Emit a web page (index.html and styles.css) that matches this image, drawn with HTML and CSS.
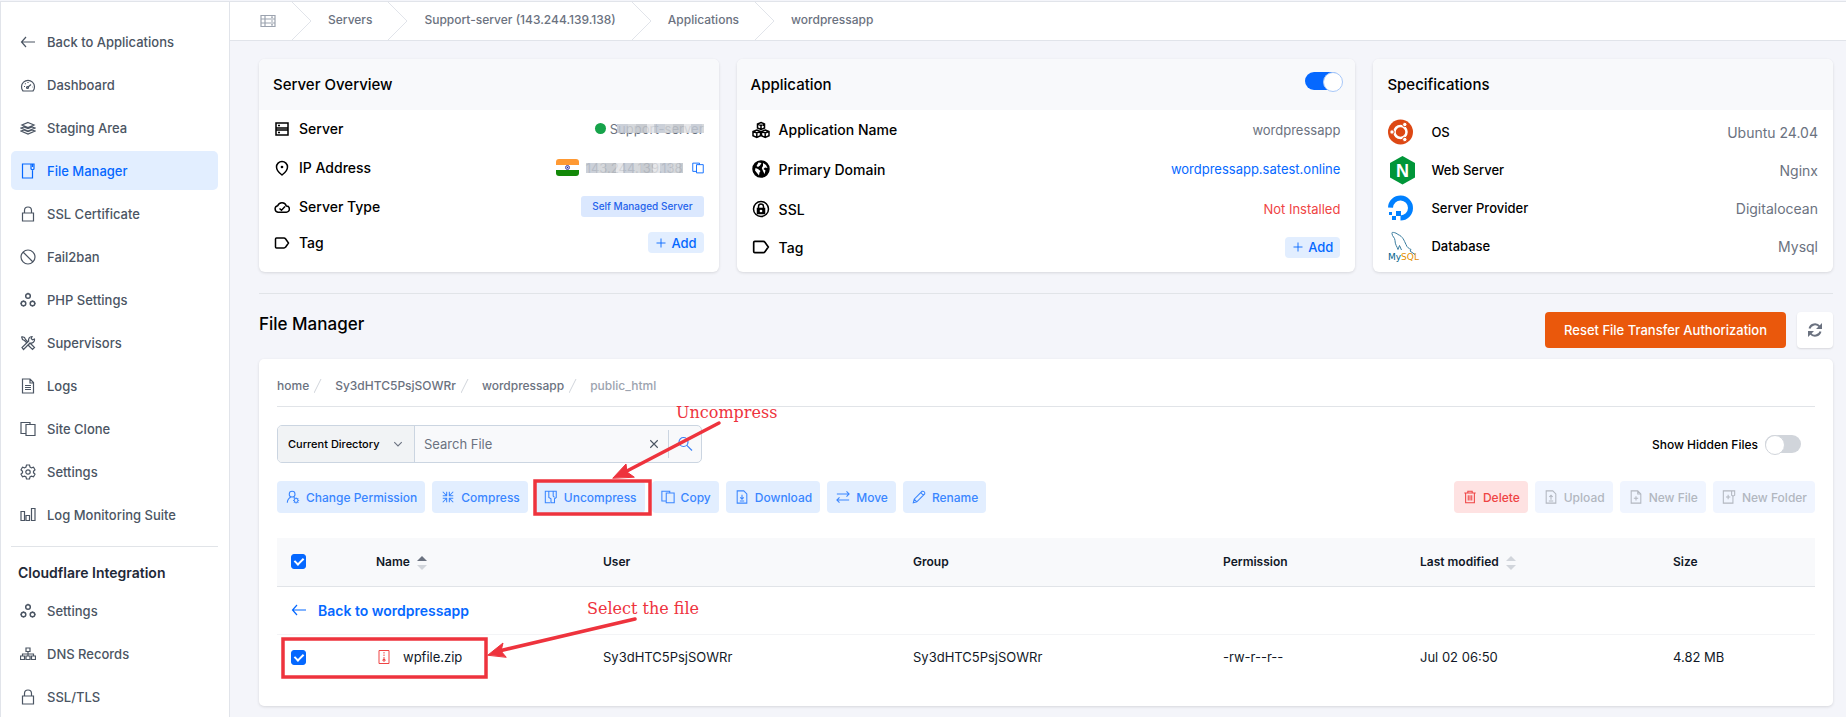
FILE: index.html
```html
<!DOCTYPE html>
<html lang="en">
<head>
    <meta charset="UTF-8">
    <meta name="viewport" content="width=device-width, initial-scale=1.0">
    <title>File Manager - wordpressapp</title>
    <link rel="stylesheet" href="styles.css">
</head>
<body>
    <svg class="sprite" aria-hidden="true">
        <symbol id="i-back" viewBox="0 0 16 16"><path d="M6 3 1.500 8 6 13M2 8h13"/></symbol>
        <symbol id="i-dash" viewBox="0 0 16 16"><path d="M3 14a6.500 6.500 0 1 1 10 0zM7.500 10.500 11 7.500M4 9.500h1M8 5v1M5 6.500l.7.7M12 10h.5"/><circle cx="7.500" cy="10.500" r="1"/></symbol>
        <symbol id="i-layers" viewBox="0 0 16 16"><path d="M8 2.500 14 5 8 7.500 2 5zM1 8l3-1 4 1.500L12 7l3 1-7 3zM1 11l3-1 4 1.500 4-1.500 3 1-7 3z"/></symbol>
        <symbol id="i-folder" viewBox="0 0 16 16"><path d="M11 1H2.500v14h10V7M11 1h3v5l-1.500 1L11 6zM12.500 1v3"/></symbol>
        <symbol id="i-lock" viewBox="0 0 16 16"><path d="M2.500 7h11v8h-11zM4.500 7V4.500a3.500 3.500 0 0 1 7 0V7"/></symbol>
        <symbol id="i-ban" viewBox="0 0 16 16"><circle cx="8" cy="8" r="7"/><path d="m3 3 10 10"/></symbol>
        <symbol id="i-nodes" viewBox="0 0 16 16"><g stroke-width="1.500"><circle cx="8" cy="4" r="2.300"/><circle cx="3.500" cy="11.500" r="2.300"/><circle cx="12.500" cy="11.500" r="2.300"/></g><path d="M8 .8v1M5 4h1M10 4h1M3.500 8.500v1M12.500 8.500v1M.5 11.500h1M14.500 11.500h1M3.500 13.500v1M12.500 13.500v1"/></symbol>
        <symbol id="i-tools" viewBox="0 0 16 16"><path d="m1.500 1.500 3 1 1 2L8 7M1.500 1.500l1 3 2 1L7 8M9 9l1.500-.5 4 4-2 2-4-4zM14.500 4l-2 .8-1.300-1.300L12 1.500A3.500 3.500 0 0 0 8.700 6L2 12.500 3.500 14.500 10 8a3.500 3.500 0 0 0 4.500-4z"/></symbol>
        <symbol id="i-doc" viewBox="0 0 16 16"><path d="M2.500 1H10l3.500 3.500V15h-11zM10 1v4h3.500M5 7.500h6M5 9.500h6M5 11.500h6"/></symbol>
        <symbol id="i-copy" viewBox="0 0 16 16"><path d="M6 3.500h9v11H6zM6 12.500H1v-11h9v2"/></symbol>
        <symbol id="i-gear" viewBox="0 0 16 16"><circle cx="8" cy="8" r="2.200"/><path d="M6.500 1h3l.5 2 1.500.9 2-.6 1.500 2.500L13.500 7.200v1.600l1.500 1.400-1.500 2.500-2-.6L10 13l-.5 2h-3L6 13l-1.500-.9-2 .6L1 10.200l1.500-1.400V7.200L1 5.800l1.500-2.500 2 .6L6 3z"/></symbol>
        <symbol id="i-bars" viewBox="0 0 16 16"><path d="M1 4.500h3.500v9H1zM6 8.500h3.500v5H6zM11.500 1.500H15v12h-3.500z"/></symbol>
        <symbol id="i-tree" viewBox="0 0 16 16"><path d="M6 2h4v3.500H6zM8 5.500V10M2.500 10V8h11v2M.5 10h4v3.500h-4zM6 10h4v3.500H6zM11.500 10h4v3.500h-4z"/></symbol>
        <symbol id="i-table" viewBox="0 0 16 16"><path d="M1 2.500h14v11H1zM1 6h14M1 10h14M5 2.500v11M11 4.200h2M11 8h2M11 11.800h2"/></symbol>
        <symbol id="i-server" viewBox="0 0 16 16"><path d="M2 2h12v5H2zM2 9h12v5H2zM4 4.500h2M4 11.500h2M2 7v2M14 7v2"/></symbol>
        <symbol id="i-pin" viewBox="0 0 16 16"><path d="M8 15S2.500 11 2.500 7a5.500 5.500 0 0 1 11 0c0 4-5.500 8-5.500 8z"/><circle cx="8" cy="7" r=".6"/></symbol>
        <symbol id="i-cloud" viewBox="0 0 16 16"><path d="M4 13.200a3.300 3.300 0 0 1-.3-6.500A4.500 4.500 0 0 1 12.300 7a3.100 3.100 0 0 1 0 6.200zM5.500 9.500l2 1.700L11 7.500"/></symbol>
        <symbol id="i-tag" viewBox="0 0 16 16"><path d="M2.500 3H10q1 0 1.500.8L14.500 8l-3 4.200Q11 13 10 13H2.500Q1.500 13 1.500 12V4q0-1 1-1z"/></symbol>
        <symbol id="i-cubes" viewBox="0 0 18 18"><path d="m9 1.500 3.500 1.500v4L9 8.500 5.500 7V3zM5.500 3 9 4.500 12.500 3M9 4.500v4M4.800 9l3.700 1.500v4.300L4.800 16.500 1 14.800v-4.300zM1 10.500 4.800 12l3.700-1.500M4.800 12v4.500M13.200 9l3.800 1.500v4.300l-3.800 1.700-3.700-1.700v-4.300zM9.500 10.500l3.700 1.500 3.800-1.500M13.200 12v4.500"/></symbol>
        <symbol id="i-globe" viewBox="0 0 18 18"><circle cx="9" cy="9" r="8" fill="currentColor"/><path d="M3.500 8 6 9l2.500 2-1 1.500-.5 3-2-2.500-2-2.500zM6.500 2.500 9.500 3 8 5.500 6 7 4.500 6zM11 3l3 2 1.500 3-2.500-.5L11.500 9l2 1.500L12.500 14 11 11 9.800 8 11 6z" fill="#fff" stroke="none"/></symbol>
        <symbol id="i-ssl" viewBox="0 0 18 18"><circle cx="9" cy="9" r="7.500"/><path d="M5.500 8.500h7v5h-7z" fill="currentColor"/><path d="M6.500 8V6.500a2.500 2.500 0 0 1 5 0V8"/><circle cx="9" cy="11" r=".6" stroke="#fff"/></symbol>
        <symbol id="i-plus" viewBox="0 0 16 16"><path d="M8 2v12M2 8h12"/></symbol>
        <symbol id="i-refresh" viewBox="0 0 16 16"><path d="M2.500 6.500a5.700 5.700 0 0 1 10-2M13.500 9.500a5.700 5.700 0 0 1-10 2" stroke-width="2"/><path d="M15 1v6H9zM1 15V9h6z" fill="currentColor" stroke="none"/></symbol>
        <symbol id="i-down" viewBox="0 0 16 16"><path d="m3 5.500 5 5 5-5"/></symbol>
        <symbol id="i-close" viewBox="0 0 16 16"><path d="m3 3 10 10M13 3 3 13"/></symbol>
        <symbol id="i-search" viewBox="0 0 16 16"><circle cx="6.500" cy="6" r="4.500"/><path d="m9.800 9.300 5.200 5.200"/></symbol>
        <symbol id="i-user" viewBox="0 0 16 16"><circle cx="7" cy="4.800" r="3.300"/><path d="M1.500 14.500C1.500 11 3 9.500 5.500 8M9 8l1 1"/><circle cx="11.500" cy="12" r="2.200"/><path d="M11.500 8.500v1M11.500 14.500v1M8 12h1M14 12h1M9 9.500l.8.800M13.300 13.800l.8.800M14 9.500l-.8.800M9.700 13.800l-.7.700"/></symbol>
        <symbol id="i-compress" viewBox="0 0 16 16"><path d="M6.500 2v4.500H2M9.500 2v4.500H14M6.500 14V9.500H2M9.500 14V9.500H14M6 6 2 2M10 6l4-4M6 10l-4 4M10 10l4 4"/></symbol>
        <symbol id="i-unzip" viewBox="0 0 16 16"><path d="M7 14.500H1.500v-13H14v7l-2 1.500v4.500H8V10L5.500 8.500v-7M10.500 2v5l1.500 1.500"/></symbol>
        <symbol id="i-download" viewBox="0 0 16 16"><path d="M2.500 1H10l3.500 3.500V15h-11zM8 5.500v5M6 8.500l2 2 2-2M5.500 12.500h5"/></symbol>
        <symbol id="i-move" viewBox="0 0 16 16"><path d="M1 4.500h14M12 1.500l3 3-3 3M15 11.500H1M4 8.500l-3 3 3 3"/></symbol>
        <symbol id="i-pencil" viewBox="0 0 16 16"><path d="m1.500 14.500 1-4 9-9q1.500-.5 2.500.5t.5 2.500l-9 9zM10 3l3 3M2.500 10.500l3 3"/></symbol>
        <symbol id="i-trash" viewBox="0 0 16 16"><path d="M1.500 3.500h13M5.500 3.500v-2h5v2M3 3.500v11h10v-11M6 6v6M8 6v6M10 6v6"/></symbol>
        <symbol id="i-upload" viewBox="0 0 16 16"><path d="M2.500 1H10l3.500 3.500V15h-11zM8 11V6M6 8l2-2 2 2M5.500 12.500h5"/></symbol>
        <symbol id="i-newfile" viewBox="0 0 16 16"><path d="M2.500 1H10l3.500 3.500V15h-11zM10 1v3.500h3.500M8 7v5M5.500 9.500h5"/></symbol>
        <symbol id="i-newfolder" viewBox="0 0 16 16"><path d="M11 1H1.500v14h11V7M11 1h3.500v5l-2 1L11 6zM7 5.500v5M4.500 8h5"/></symbol>
        <symbol id="i-zip" viewBox="0 0 12 14"><path d="M1 .5h10v13H1zM6 2v1.500M6 4.500V6M6 7v2M5 9.500h2v1.500H5z"/></symbol>
    </svg>

    <aside class="sidebar">
        <nav>
            <a class="nav-item" href="#"><svg class="icon"><use href="#i-back"/></svg>Back to Applications</a>
            <a class="nav-item" href="#"><svg class="icon"><use href="#i-dash"/></svg>Dashboard</a>
            <a class="nav-item" href="#"><svg class="icon"><use href="#i-layers"/></svg>Staging Area</a>
            <a class="nav-item active" href="#"><svg class="icon"><use href="#i-folder"/></svg>File Manager</a>
            <a class="nav-item" href="#"><svg class="icon"><use href="#i-lock"/></svg>SSL Certificate</a>
            <a class="nav-item" href="#"><svg class="icon"><use href="#i-ban"/></svg>Fail2ban</a>
            <a class="nav-item" href="#"><svg class="icon"><use href="#i-nodes"/></svg>PHP Settings</a>
            <a class="nav-item" href="#"><svg class="icon"><use href="#i-tools"/></svg>Supervisors</a>
            <a class="nav-item" href="#"><svg class="icon"><use href="#i-doc"/></svg>Logs</a>
            <a class="nav-item" href="#"><svg class="icon"><use href="#i-copy"/></svg>Site Clone</a>
            <a class="nav-item" href="#"><svg class="icon"><use href="#i-gear"/></svg>Settings</a>
            <a class="nav-item" href="#"><svg class="icon"><use href="#i-bars"/></svg>Log Monitoring Suite</a>
        </nav>
        <h2 class="nav-title">Cloudflare Integration</h2>
        <nav>
            <a class="nav-item" href="#"><svg class="icon"><use href="#i-nodes"/></svg>Settings</a>
            <a class="nav-item" href="#"><svg class="icon"><use href="#i-tree"/></svg>DNS Records</a>
            <a class="nav-item" href="#"><svg class="icon"><use href="#i-lock"/></svg>SSL/TLS</a>
        </nav>
    </aside>

    <div class="page">
        <nav class="crumbs">
            <a href="#" aria-label="Home"><svg class="icon"><use href="#i-table"/></svg></a>
            <svg class="sep" viewBox="0 0 20 38"><path d="M0 0l19 19L0 38"/></svg>
            <a href="#">Servers</a>
            <svg class="sep" viewBox="0 0 20 38"><path d="M0 0l19 19L0 38"/></svg>
            <a href="#">Support-server (143.244.139.138)</a>
            <svg class="sep" viewBox="0 0 20 38"><path d="M0 0l19 19L0 38"/></svg>
            <a href="#">Applications</a>
            <svg class="sep" viewBox="0 0 20 38"><path d="M0 0l19 19L0 38"/></svg>
            <a href="#">wordpressapp</a>
        </nav>

        <main class="main">
            <div class="cards">
                <section class="card">
                    <header class="card-header"><h3>Server Overview</h3></header>
                    <div class="card-body server-rows">
                        <div class="row">
                            <svg class="icon"><use href="#i-server"/></svg><span class="label">Server</span>
                            <span class="dot"></span><span class="value masked">Support-server</span>
                        </div>
                        <div class="row">
                            <svg class="icon"><use href="#i-pin"/></svg><span class="label">IP Address</span>
                            <svg class="flag" viewBox="0 0 23 17"><path fill="#fff" d="M0 0h23v17H0z"/><path fill="#ff9933" d="M0 0h23v6H0z"/><path fill="#138808" d="M0 11h23v6H0z"/><circle cx="11.500" cy="8.500" r="2" fill="#cfd0f0" stroke="#4a4ab0"/><circle cx="11.500" cy="8.500" r=".7" fill="#22228a"/></svg>
                            <span class="value masked ip">143.244.139.138</span>
                            <button class="copy-btn" aria-label="Copy IP"><svg class="icon"><use href="#i-copy"/></svg></button>
                        </div>
                        <div class="row">
                            <svg class="icon"><use href="#i-cloud"/></svg><span class="label">Server Type</span>
                            <span class="badge">Self Managed Server</span>
                        </div>
                        <div class="row">
                            <svg class="icon"><use href="#i-tag"/></svg><span class="label">Tag</span>
                            <button class="add-btn"><svg class="icon"><use href="#i-plus"/></svg>Add</button>
                        </div>
                    </div>
                </section>

                <section class="card card-wide">
                    <header class="card-header"><h3>Application</h3><input class="switch" type="checkbox" aria-label="Application enabled" checked></header>
                    <div class="card-body app-rows">
                        <div class="row"><svg class="icon"><use href="#i-cubes"/></svg><span class="label">Application Name</span><span class="value">wordpressapp</span></div>
                        <div class="row"><svg class="icon"><use href="#i-globe"/></svg><span class="label">Primary Domain</span><a class="value link" href="#">wordpressapp.satest.online</a></div>
                        <div class="row"><svg class="icon"><use href="#i-ssl"/></svg><span class="label">SSL</span><span class="value danger">Not Installed</span></div>
                        <div class="row"><svg class="icon"><use href="#i-tag"/></svg><span class="label">Tag</span><button class="add-btn"><svg class="icon"><use href="#i-plus"/></svg>Add</button></div>
                    </div>
                </section>

                <section class="card">
                    <header class="card-header"><h3>Specifications</h3></header>
                    <div class="card-body spec-rows">
                        <div class="row">
                            <svg class="logo" viewBox="0 0 28 28"><circle cx="12.500" cy="14" r="12.500" fill="#dd4814"/><circle cx="12.500" cy="14" r="6" fill="none" stroke="#fff" stroke-width="2.500"/><g fill="#fff" stroke="#dd4814"><circle cx="4" cy="14" r="2.200"/><circle cx="16.800" cy="6.500" r="2.200"/><circle cx="16.800" cy="21.500" r="2.200"/></g></svg>
                            <span class="label">OS</span><span class="value">Ubuntu 24.04</span>
                        </div>
                        <div class="row">
                            <svg class="logo" viewBox="0 0 28 28"><path fill="#009639" d="M14.500 0 27 7v14.500L14.500 28.500 2 21.500V7z"/><text class="nginx-n" x="14.500" y="21" text-anchor="middle">N</text></svg>
                            <span class="label">Web Server</span><span class="value">Nginx</span>
                        </div>
                        <div class="row">
                            <svg class="logo" viewBox="0 0 28 28"><path d="M2.500 13.500a10 10 0 1 1 10 10.500" fill="none" stroke="#0080ff" stroke-width="5"/><path fill="#0080ff" d="M8 17h5v5H8zM4 22h4v4H4zM1 18h3v3H1z"/></svg>
                            <span class="label">Server Provider</span><span class="value">Digitalocean</span>
                        </div>
                        <div class="row">
                            <svg class="logo" viewBox="0 0 28 28"><path d="M4 1.500c-1-2 4-1 6 1 5 2 6 6 8 10 1 3 3 4 5 5l-1 1.500 5 3.500M4 1.500c0 3 3 4 3 7 0 4 2 6 3 9l1.500-4 2 4.500" fill="none" stroke="#3a7c9e"/><text class="mysql" x="0" y="28" fill="#00618a">My<tspan fill="#e48e00">SQL</tspan></text></svg>
                            <span class="label">Database</span><span class="value">Mysql</span>
                        </div>
                    </div>
                </section>
            </div>

            <div class="title-bar">
                <h1>File Manager</h1>
                <button class="reset-btn">Reset File Transfer Authorization</button>
                <button class="refresh-btn" aria-label="Refresh"><svg class="icon"><use href="#i-refresh"/></svg></button>
            </div>

            <section class="panel">
                <nav class="path">
                    <a href="#">home</a><svg class="slash" viewBox="0 0 8 14"><path d="M0 14 7 0"/></svg>
                    <a href="#">Sy3dHTC5PsjSOWRr</a><svg class="slash" viewBox="0 0 8 14"><path d="M0 14 7 0"/></svg>
                    <a href="#">wordpressapp</a><svg class="slash" viewBox="0 0 8 14"><path d="M0 14 7 0"/></svg>
                    <span>public_html</span>
                </nav>

                <div class="filters">
                    <div class="search">
                        <div class="scope">
                            <select aria-label="Search scope"><option>Current Directory</option></select>
                            <svg class="icon"><use href="#i-down"/></svg>
                        </div>
                        <input type="text" placeholder="Search File" aria-label="Search File">
                        <button class="clear-btn" aria-label="Clear"><svg class="icon"><use href="#i-close"/></svg></button>
                        <button class="search-btn" aria-label="Search"><svg class="icon"><use href="#i-search"/></svg></button>
                    </div>
                    <label class="hidden-toggle">Show Hidden Files <input class="switch" type="checkbox"></label>
                </div>

                <div class="toolbar">
                    <button class="tool"><svg class="icon"><use href="#i-user"/></svg>Change Permission</button>
                    <button class="tool"><svg class="icon"><use href="#i-compress"/></svg>Compress</button>
                    <button class="tool"><svg class="icon"><use href="#i-unzip"/></svg>Uncompress</button>
                    <button class="tool"><svg class="icon"><use href="#i-copy"/></svg>Copy</button>
                    <button class="tool"><svg class="icon"><use href="#i-download"/></svg>Download</button>
                    <button class="tool"><svg class="icon"><use href="#i-move"/></svg>Move</button>
                    <button class="tool"><svg class="icon"><use href="#i-pencil"/></svg>Rename</button>
                    <button class="tool tool-delete"><svg class="icon"><use href="#i-trash"/></svg>Delete</button>
                    <button class="tool" disabled><svg class="icon"><use href="#i-upload"/></svg>Upload</button>
                    <button class="tool" disabled><svg class="icon"><use href="#i-newfile"/></svg>New File</button>
                    <button class="tool" disabled><svg class="icon"><use href="#i-newfolder"/></svg>New Folder</button>
                </div>

                <table class="files">
                    <thead>
                        <tr>
                            <th class="col-check"><input class="check" type="checkbox" aria-label="Select all" checked></th>
                            <th class="col-name">Name <svg class="sort asc" viewBox="0 0 10 14"><path d="M5 0l5 5H0z"/><path d="M0 9h10l-5 5z"/></svg></th>
                            <th class="col-owner">User</th>
                            <th class="col-owner">Group</th>
                            <th class="col-perm">Permission</th>
                            <th class="col-date">Last modified <svg class="sort" viewBox="0 0 10 14"><path d="M5 0l5 5H0z"/><path d="M0 9h10l-5 5z"/></svg></th>
                            <th>Size</th>
                        </tr>
                    </thead>
                    <tbody>
                        <tr>
                            <td colspan="7"><a class="up-link" href="#"><svg class="icon"><use href="#i-back"/></svg>Back to wordpressapp</a></td>
                        </tr>
                        <tr>
                            <td><input class="check" type="checkbox" aria-label="Select wpfile.zip" checked></td>
                            <td><span class="file"><svg class="zip"><use href="#i-zip"/></svg>wpfile.zip</span></td>
                            <td>Sy3dHTC5PsjSOWRr</td>
                            <td>Sy3dHTC5PsjSOWRr</td>
                            <td>-rw-r--r--</td>
                            <td>Jul 02 06:50</td>
                            <td>4.82 MB</td>
                        </tr>
                    </tbody>
                </table>

                <!-- tutorial callouts drawn over the panel -->
                <svg class="callouts" width="540" height="340">
                    <rect x="276" y="122" width="115" height="33"/>
                    <path d="M460 64 366 113"/>
                    <path class="head" d="m354 119 13-14 1 8 7 5z"/>
                    <text x="417" y="59">Uncompress</text>
                    <rect x="24" y="280" width="203" height="38"/>
                    <path d="M376 260 240 292"/>
                    <path class="head" d="m229 296 15-12-2 8 5 6z"/>
                    <text x="328" y="255">Select the file</text>
                </svg>
            </section>
        </main>
    </div>
</body>
</html>
```
FILE: styles.css
```css
* {
    box-sizing: border-box;
}
body {
    margin: 0;
    display: flex;
    height: 100vh;
    overflow: hidden;
    padding-top: 1px;
    background-color: #f4f5fa;
    font-family: Inter, "Liberation Sans", sans-serif;
    font-size: 13px;
    color: #111827;
}
a {
    color: inherit;
    text-decoration: none;
}
button, input, select {
    font: inherit;
    margin: 0;
}
button {
    border: 0;
    cursor: pointer;
}
h1, h2, h3 {
    margin: 0;
    font-weight: 500;
}
.sprite {
    display: none;
}
.icon {
    width: 16px;
    height: 16px;
    flex: none;
    fill: none;
    stroke: currentColor;
    stroke-width: 1.2;
}

/* sidebar */
.sidebar {
    flex: none;
    width: 230px;
    padding: 20px 11px 0 10px;
    border: 1px solid #e1e4ea;
    border-bottom: 0;
    background-color: #fff;
    font-weight: 500;
    color: #4b5563;
}
.nav-item {
    display: flex;
    align-items: center;
    gap: 11px;
    height: 39px;
    margin-bottom: 4px;
    padding-left: 9px;
    border-radius: 5px;
}
.nav-item.active {
    background-color: #e2eeff;
    color: #0568ff;
}
.nav-title {
    margin-top: 12px;
    padding: 17px 7px 9px;
    border-top: 1px solid #e1e4e8;
    font-size: 14px;
    line-height: 18px;
    font-weight: 600;
    color: #1f2937;
}

/* top breadcrumbs */
.page {
    flex: 1;
    min-width: 0;
}
.crumbs {
    display: flex;
    align-items: center;
    gap: 16px;
    height: 40px;
    padding-left: 30px;
    border-top: 1px solid #e1e4ea;
    border-bottom: 1px solid #e1e4ea;
    background-color: #fff;
    font-size: 12px;
    font-weight: 500;
    color: #6b7280;
}
.crumbs a {
    display: flex;
    padding-bottom: 3px;
}
.crumbs a:first-child {
    padding-bottom: 0;
    color: #9ca3af;
}
.sep {
    width: 20px;
    height: 38px;
    fill: none;
    stroke: #e1e4ea;
}

.main {
    padding: 18px 13px 0 29px;
}

/* info cards */
.cards {
    display: grid;
    grid-template-columns: repeat(10, 1fr);
    gap: 18px;
    padding-bottom: 21px;
    border-bottom: 1px solid #e1e4e8;
}
.card {
    grid-column: span 3;
    border-radius: 6px;
    background-color: #fff;
    box-shadow: 0 1px 3px rgba(0, 0, 0, 0.12);
    overflow: hidden;
}
.card-wide {
    grid-column: span 4;
}
.card-header {
    display: flex;
    justify-content: space-between;
    height: 51px;
    padding: 13px 14px;
    background-color: #f8f9fb;
}
.card-header h3 {
    font-size: 15px;
    line-height: 26px;
    color: #000;
}
.card-body {
    display: grid;
    height: 162px;
    padding: 0 15px;
    align-content: start;
}
.server-rows {
    grid-template-rows: 37px 41px 37px 35px;
}
.app-rows {
    grid-template-rows: 39px 40px 40px 36px;
}
.spec-rows {
    grid-auto-rows: 38px;
    padding-top: 3px;
}
.row {
    display: flex;
    align-items: center;
}
.row .label {
    margin: 0 auto 0 9px;
    font-size: 14px;
    font-weight: 500;
    color: #000;
}
.row > .icon {
    color: #000;
    stroke-width: 1.5;
}
.app-rows .row > .icon {
    width: 18px;
    height: 18px;
}
.spec-rows .row .label {
    margin-left: 15px;
    font-size: 13px;
}
.row .value {
    color: #6b7280;
}
.spec-rows .row .value {
    font-size: 14px;
}
.row .link {
    color: #0568ff;
}
.row .danger {
    color: #ef4444;
}
.dot {
    width: 11px;
    height: 11px;
    margin-right: 4px;
    border-radius: 50%;
    background-color: #16a34a;
}
.masked {
    position: relative;
}
.masked::after {
    content: "";
    position: absolute;
    inset: 3px 0 4px 7px;
    background: repeating-linear-gradient(90deg, #c2c8d2 0 11px, #cfd2d6 11px 19px, #bfc3c9 19px 30px, #e2e3e6 30px 37px);
    opacity: 0.85;
}
.masked.ip::after {
    inset: 3px 0 3px 0;
}
.flag {
    width: 23px;
    height: 17px;
    margin-right: 7px;
    border-radius: 3px;
}
.copy-btn {
    display: flex;
    margin-left: 9px;
    padding: 0;
    background: none;
    color: #0568ff;
}
.copy-btn .icon {
    width: 12px;
    height: 12px;
}
.badge {
    padding: 0 11px;
    border-radius: 3px;
    background-color: #dbe8fe;
    font-size: 10px;
    font-weight: 500;
    line-height: 21px;
    color: #2563eb;
}
.add-btn {
    display: flex;
    align-items: center;
    gap: 4px;
    height: 21px;
    padding: 0 7px;
    border-radius: 4px;
    background-color: #e2eeff;
    font-weight: 500;
    color: #0568ff;
}
.add-btn .icon {
    width: 12px;
    height: 12px;
}
.logo {
    width: 28px;
    height: 28px;
    overflow: visible;
}
.nginx-n {
    font: bold 18px "Liberation Sans", sans-serif;
    fill: #fff;
}
.mysql {
    font: 9px "DejaVu Sans", sans-serif;
}

/* switches */
.switch {
    appearance: none;
    flex: none;
    width: 36px;
    height: 18px;
    border-radius: 9px;
    background-color: #d1d5db;
}
.switch::before {
    content: "";
    display: block;
    width: 18px;
    height: 18px;
    border: 1px solid #d1d5db;
    border-radius: 50%;
    background-color: #fff;
}
.switch:checked {
    background-color: #0568ff;
}
.switch:checked::before {
    margin-left: 18px;
    border-color: #a8c8f8;
}

/* title row */
.title-bar {
    display: flex;
    align-items: center;
    padding: 18px 0 11px;
}
.title-bar h1 {
    margin-right: auto;
    padding-bottom: 12px;
    font-size: 17px;
    line-height: 24px;
    color: #000;
}
.reset-btn {
    height: 36px;
    margin-right: 11px;
    padding: 0 19px;
    border-radius: 4px;
    background-color: #ea580c;
    font-weight: 500;
    color: #fff;
}
.refresh-btn {
    display: grid;
    place-items: center;
    width: 36px;
    height: 36px;
    border-radius: 4px;
    background-color: #fff;
    box-shadow: 0 1px 2px rgba(0, 0, 0, 0.12);
    color: #6b7280;
}

/* file panel */
.panel {
    position: relative;
    padding: 18px 18px 26px;
    border-radius: 5px;
    background-color: #fff;
    box-shadow: 0 1px 3px rgba(0, 0, 0, 0.12);
}
.path {
    display: flex;
    align-items: center;
    height: 30px;
    padding-bottom: 12px;
    border-bottom: 1px solid #e1e4e8;
    font-size: 12px;
    font-weight: 500;
    color: #6b7280;
}
.path span {
    color: #9ca3af;
}
.slash {
    width: 8px;
    height: 14px;
    margin: 0 13px 0 5px;
    fill: none;
    stroke: #d1d5db;
}
.filters {
    display: flex;
    justify-content: space-between;
    align-items: center;
    padding: 18px 14px 18px 0;
}
.search {
    display: flex;
    align-items: center;
    width: 425px;
    height: 38px;
    border: 1px solid #cbd5e1;
    border-radius: 5px;
    background-color: #f8f9fb;
    overflow: hidden;
}
.scope {
    display: grid;
    align-items: center;
    width: 137px;
    height: 36px;
    border-right: 1px solid #cbd5e1;
    background-color: #f1f3f5;
}
.scope select,
.scope .icon {
    grid-area: 1 / 1;
}
.scope select {
    appearance: none;
    height: 36px;
    padding: 0 10px;
    border: 0;
    background: none;
    font-size: 11px;
    font-weight: 500;
    color: #000;
}
.scope .icon {
    justify-self: end;
    width: 12px;
    height: 12px;
    margin-right: 10px;
    color: #6b7280;
    stroke-width: 1.5;
    pointer-events: none;
}
.search input {
    flex: 1;
    min-width: 0;
    padding: 0 9px;
    border: 0;
    background: none;
    outline: 0;
}
.search input::placeholder {
    color: #6b7280;
}
.search button {
    display: flex;
    align-items: center;
    height: 28px;
    padding: 0 8px;
    background: none;
}
.search .clear-btn {
    border-right: 1px solid #cbd5e1;
    color: #4b5563;
}
.clear-btn .icon {
    width: 12px;
    height: 12px;
    stroke-width: 1.5;
}
.search .search-btn {
    color: #3b82f6;
}
.hidden-toggle {
    display: flex;
    align-items: center;
    gap: 7px;
    font-size: 12px;
    font-weight: 500;
    color: #000;
}
.toolbar {
    display: flex;
    gap: 7px;
    padding-bottom: 25px;
}
.tool {
    display: flex;
    align-items: center;
    gap: 6px;
    height: 32px;
    padding: 0 8px 0 9px;
    border-radius: 4px;
    background-color: #e2eeff;
    font-size: 12px;
    font-weight: 500;
    color: #3a86ff;
    white-space: nowrap;
}
.tool .icon {
    width: 14px;
    height: 14px;
}
.tool-delete {
    margin-left: auto;
    background-color: #fee2e2;
    color: #ef4444;
}
.tool:disabled {
    background-color: #f0f5ff;
    color: #b2b7c0;
}

/* file table */
.files {
    width: 100%;
    border-collapse: collapse;
    table-layout: fixed;
    text-align: left;
}
.files th,
.files td {
    height: 48px;
    padding: 0 14px;
}
.files th {
    border-bottom: 1px solid #e1e4e8;
    background-color: #f8f9fb;
    font-size: 12px;
    font-weight: 600;
}
.files td {
    border-bottom: 1px solid #f3f4f6;
}
.files tr:last-child td {
    height: 46px;
    border-bottom: 0;
}
.col-check {
    width: 85px;
}
.col-name {
    width: 227px;
}
.col-owner {
    width: 310px;
}
.col-perm {
    width: 197px;
}
.col-date {
    width: 253px;
}
.sort {
    width: 10px;
    height: 14px;
    margin-left: 4px;
    fill: #d1d5db;
    vertical-align: middle;
}
.sort.asc path:first-child {
    fill: #6b7280;
}
.check {
    appearance: none;
    display: grid;
    place-items: center;
    width: 15px;
    height: 15px;
    border: 1px solid #cbd5e1;
    border-radius: 3px;
}
.check:checked {
    border-color: #0568ff;
    background-color: #0568ff;
}
.check:checked::before {
    content: "";
    width: 4px;
    height: 7px;
    margin-bottom: 2px;
    border: solid #fff;
    border-width: 0 2px 2px 0;
    transform: rotate(45deg);
}
.up-link {
    display: flex;
    align-items: center;
    gap: 11px;
    font-size: 14px;
    font-weight: 600;
    color: #0568ff;
}
.file {
    display: flex;
    align-items: center;
    gap: 13px;
    padding-left: 2px;
}
.zip {
    width: 12px;
    height: 14px;
    fill: none;
    stroke: #ef4444;
}
.callouts {
    position: absolute;
    top: 0;
    left: 0;
    fill: none;
    stroke: #ee333d;
    stroke-width: 3.5;
    stroke-linecap: round;
    pointer-events: none;
}
.callouts .head {
    fill: #ee333d;
    stroke-width: 1;
}
.callouts text {
    font-family: "DejaVu Serif", serif;
    font-size: 16px;
    fill: #ee333d;
    stroke: none;
}
```
